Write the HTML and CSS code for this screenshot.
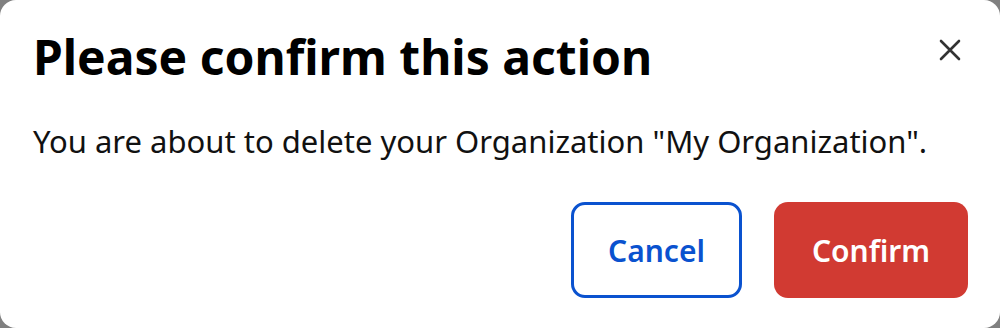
FILE: index.html
```html
<!DOCTYPE html>
<html lang="en">
<head>
    <meta charset="UTF-8">
    <title>Confirm</title>
    <link rel="stylesheet" href="styles.css">
</head>
<body>
    <div class="dialog">
        <div class="dialog-header">
            <h1>Please confirm this action</h1>
            <button class="close-btn" aria-label="Close">
                <svg width="24" height="24" viewBox="0 0 24 24">
                    <path d="M3 3 L21 21 M21 3 L3 21" stroke="#333" stroke-width="2.6" stroke-linecap="round"/>
                </svg>
            </button>
        </div>
        <p class="message">You are about to delete your Organization "My Organization".</p>
        <div class="actions">
            <button class="btn btn-cancel">Cancel</button>
            <button class="btn btn-confirm">Confirm</button>
        </div>
    </div>
</body>
</html>
```

FILE: styles.css
```css
* {
    margin: 0;
    padding: 0;
    box-sizing: border-box;
}
html, body {
    height: 100%;
}
body {
    background-color: #808080;
    font-family: 'Noto Sans', 'Open Sans', sans-serif;
}
.dialog {
    background-color: #fff;
    border-radius: 16px;
    height: 100%;
    padding: 24px 32px 30px 33px;
    display: flex;
    flex-direction: column;
}
.dialog-header {
    display: flex;
    justify-content: space-between;
    align-items: flex-start;
}
h1 {
    font-size: 48px;
    font-weight: 700;
    color: #000;
}
.close-btn {
    background: none;
    border: none;
    cursor: pointer;
    width: 36px;
    height: 36px;
    display: flex;
    align-items: center;
    justify-content: center;
    margin-top: 8px;
}
.message {
    margin-top: 31px;
    font-size: 31px;
    color: #111;
}
.actions {
    margin-top: auto;
    display: flex;
    justify-content: flex-end;
    gap: 32px;
}
.btn {
    height: 96px;
    border-radius: 14px;
    font-family: inherit;
    font-size: 30px;
    font-weight: 600;
    cursor: pointer;
}
.btn-cancel {
    width: 171px;
    background-color: #fff;
    border: 3px solid #0a52cf;
    color: #0a52cf;
}
.btn-confirm {
    width: 194px;
    background-color: #d13a32;
    border: none;
    color: #fff;
}
```
